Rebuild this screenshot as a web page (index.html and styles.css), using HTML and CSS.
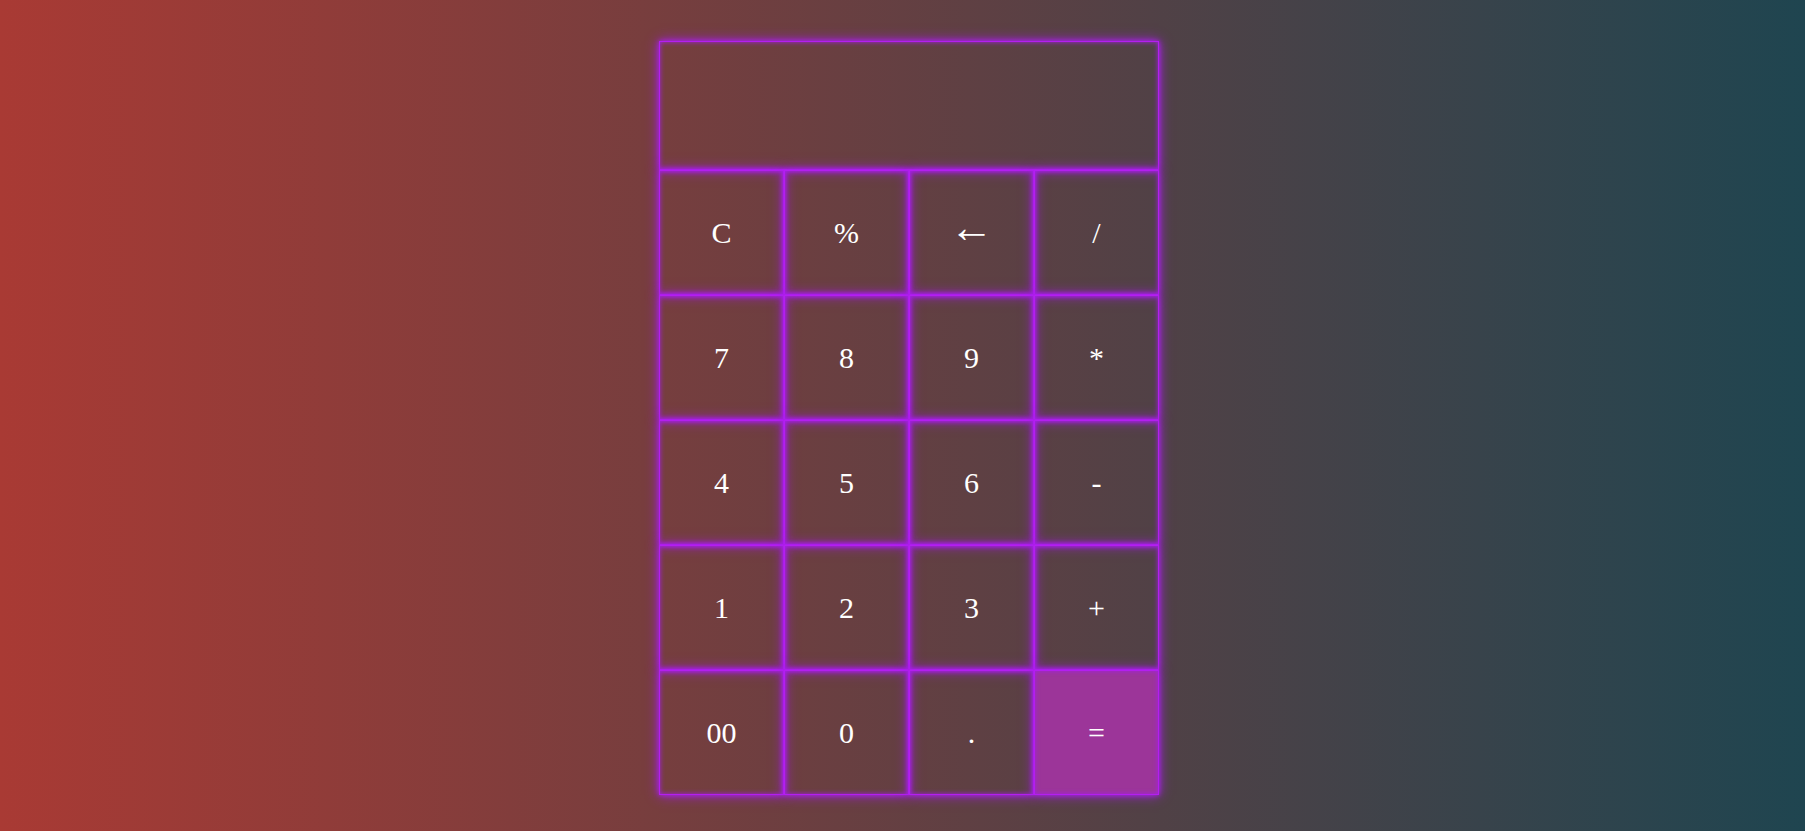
FILE: index.html
```html
<!DOCTYPE html>
<html>
<head>
<meta charset="utf-8">
<link rel="stylesheet" href="styles.css">
</head>
<body>
<div class="page">
  <div class="calculator">
    <div class="display"></div>
    <div class="keys">
      <button class="key">C</button>
      <button class="key">%</button>
      <button class="key arrow">←</button>
      <button class="key">/</button>
      <button class="key">7</button>
      <button class="key">8</button>
      <button class="key">9</button>
      <button class="key">*</button>
      <button class="key">4</button>
      <button class="key">5</button>
      <button class="key">6</button>
      <button class="key">-</button>
      <button class="key">1</button>
      <button class="key">2</button>
      <button class="key">3</button>
      <button class="key">+</button>
      <button class="key">00</button>
      <button class="key">0</button>
      <button class="key">.</button>
      <button class="key equal">=</button>
    </div>
  </div>
</div>
</body>
</html>
```
FILE: styles.css
```css
html, body {
  margin: 0;
  height: 100%;
}
body {
  background: linear-gradient(to right, #a93a34, #1f4550);
  font-family: "Liberation Serif", "Times New Roman", serif;
  overflow: hidden;
}
.page {
  display: flex;
  justify-content: center;
  padding-top: 41px;
  padding-left: 13px;
}
.calculator {
  width: 500px;
  display: flex;
  flex-direction: column;
}
.display,
.key {
  border: 1px solid #b41ff0;
  box-shadow: 0 0 12px #a51ee8, 0 0 5px #b020f0, inset 0 0 5px #a51ee8;
}
.display {
  height: 129px;
  box-sizing: border-box;
}
.keys {
  display: grid;
  grid-template-columns: repeat(4, 125px);
  grid-auto-rows: 125px;
}
.key {
  background: transparent;
  color: #fff;
  font-family: "Liberation Serif", "Times New Roman", serif;
  font-size: 30px;
  padding: 0;
  margin: 0;
}
.key.arrow {
  font-size: 44px;
  line-height: 1;
  padding-bottom: 9px;
}
.key.equal {
  background: #9c3599;
}
```
